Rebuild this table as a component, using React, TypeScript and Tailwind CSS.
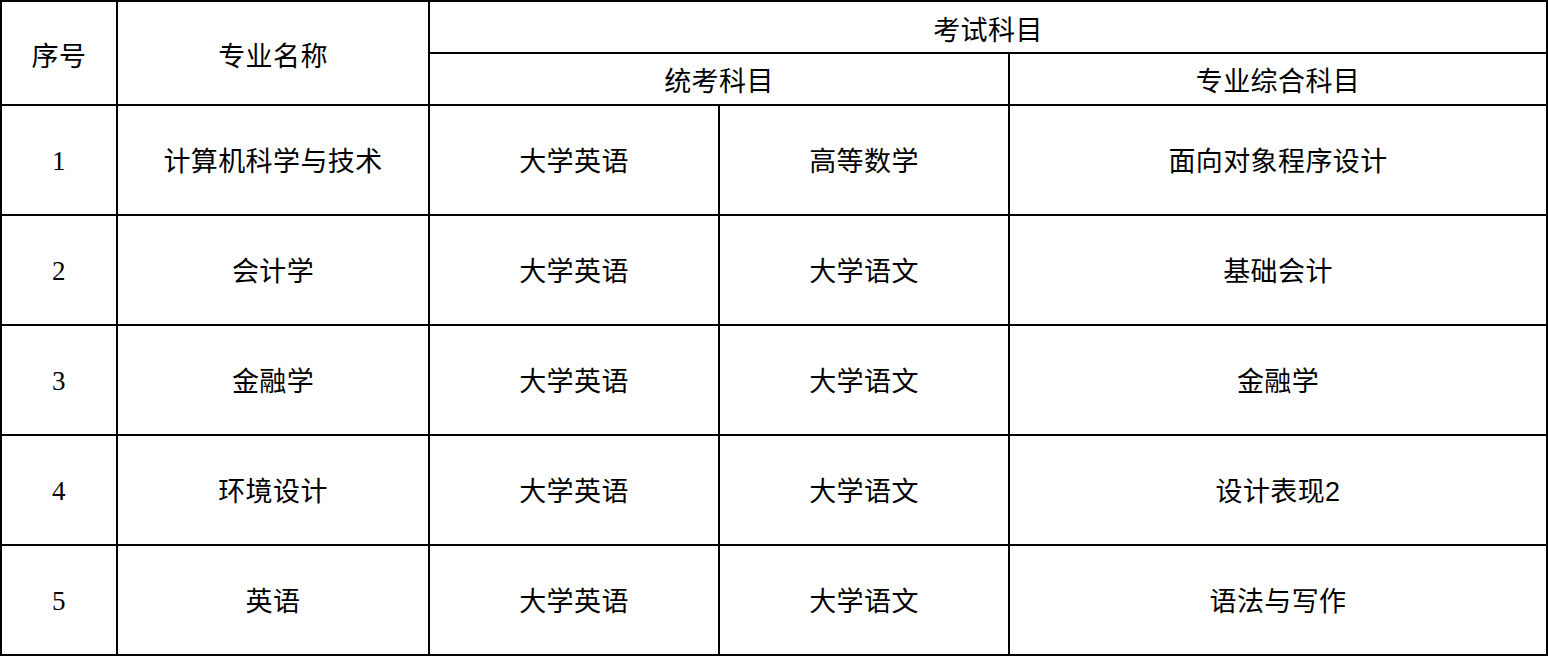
const rows = [
  { no: "1", major: "计算机科学与技术", a: "大学英语", b: "高等数学", c: "面向对象程序设计" },
  { no: "2", major: "会计学", a: "大学英语", b: "大学语文", c: "基础会计" },
  { no: "3", major: "金融学", a: "大学英语", b: "大学语文", c: "金融学" },
  { no: "4", major: "环境设计", a: "大学英语", b: "大学语文", c: "设计表现2" },
  { no: "5", major: "英语", a: "大学英语", b: "大学语文", c: "语法与写作" },
]

const cell = "bg-white flex items-center justify-center"

function Text({ value }: { value: string }) {
  // trailing digit renders sans in the reference
  const m = value.match(/^(.*?)(\d+)$/)
  if (m && m[1]) {
    return (
      <span>
        {m[1]}
        <span className="font-['Liberation_Sans',sans-serif]">{m[2]}</span>
      </span>
    )
  }
  return <span>{value}</span>
}

export default function App() {
  return (
    <div className="w-[1548px] h-[656px] bg-white">
      <div
        className="grid bg-black p-[2px] gap-[2px] text-black text-[27px] tracking-[0.4px] leading-none font-['Liberation_Serif','Noto_Sans_CJK_SC',serif] grid-cols-[114px_310px_288px_288px_536px] grid-rows-[50px_50px_108px_108px_108px_108px_108px]"
      >
        <div className={`${cell} row-span-2 pt-[8px]`}>序号</div>
        <div className={`${cell} row-span-2 pt-[8px]`}>专业名称</div>
        <div className={`${cell} col-span-3 pt-[8px]`}>考试科目</div>
        <div className={`${cell} col-span-2 pt-[7px]`}>统考科目</div>
        <div className={`${cell} pt-[7px]`}>专业综合科目</div>
        {rows.map((r) => (
          <div key={r.no} className="contents">
            <div className={`${cell} pt-[3px]`}>{r.no}</div>
            <div className={`${cell} pt-[4px]`}>{r.major}</div>
            <div className={`${cell} pt-[4px]`}>{r.a}</div>
            <div className={`${cell} pt-[4px]`}>{r.b}</div>
            <div className={`${cell} pt-[4px]`}>
              <Text value={r.c} />
            </div>
          </div>
        ))}
      </div>
    </div>
  )
}
